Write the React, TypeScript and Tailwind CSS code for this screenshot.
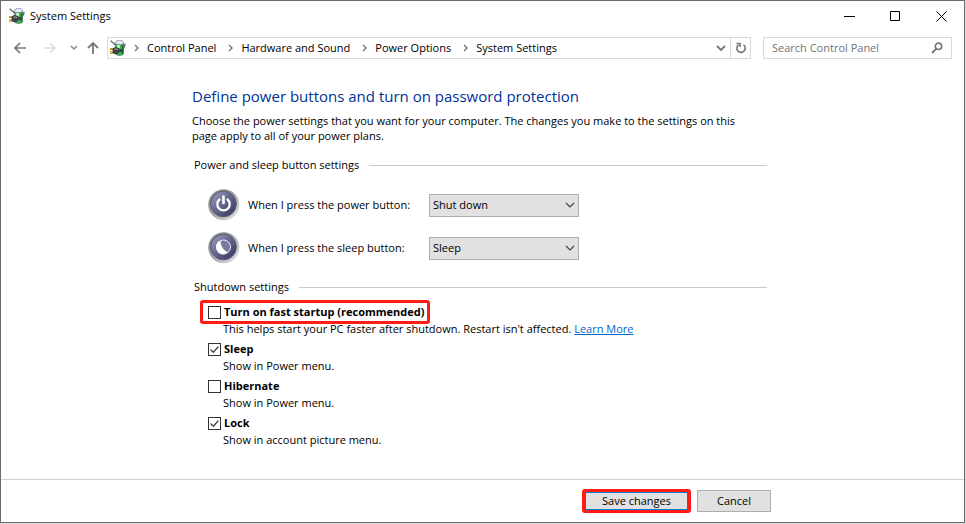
import React from "react";

const crumbs = ["Control Panel", "Hardware and Sound", "Power Options", "System Settings"];

const shutdownOptions = [
  { id: "fast-startup", label: "Turn on fast startup (recommended)", note: "This helps start your PC faster after shutdown. Restart isn't affected.", checked: false, marked: true, link: "Learn More" },
  { id: "sleep", label: "Sleep", note: "Show in Power menu.", checked: true },
  { id: "hibernate", label: "Hibernate", note: "Show in Power menu.", checked: false },
  { id: "lock", label: "Lock", note: "Show in account picture menu.", checked: true },
];

const PowerPlanIcon = () => (
  <svg width="16" height="16" viewBox="0 0 16 16" className="shrink-0">
    <path d="M1 .5C1 3 4 2 5 5M12.500 8c2 0 2.500-2 2.500-4.500" fill="none" stroke="#50545c" strokeWidth="1.200" />
    <path d="M5.500 3.500v10c0 2.500 8 2.500 8 0v-10z" fill="#3fb653" stroke="#3a5f46" strokeWidth="0.600" />
    <path d="M11.800 4h1.400v10l-1.400.8z" fill="#16742f" />
    <path d="M7 5h3v3H7z" fill="#b9efc3" />
    <path d="M5.500 2.500C6-.5 13-.5 13.500 2.500v1.300c-2 1-6 1-8 0z" fill="#e6eaf6" stroke="#7c86a2" strokeWidth="0.800" />
    <path d="M0 9h3.500M0 12.500h3.500" stroke="#7e6417" strokeWidth="2.200" />
    <path d="M0 8.800h3.500M0 12.300h3.500" stroke="#f0b91d" strokeWidth="1.200" />
    <path d="M3 8.500 5 7.500l3 .5 1.500 1.500H12v2H9.500L8 13.200l-3 .5L3 13z" fill="#42464c" stroke="#202326" strokeWidth="0.600" />
    <path d="M4.500 9h2l1.500.8" fill="none" stroke="#a5a9b0" strokeWidth="1" />
  </svg>
);

const RoundIcon = ({ id, children }: { id: string; children: React.ReactNode }) => (
  <svg width="32" height="32" viewBox="0 0 32 32" className="shrink-0">
    <defs>
      <linearGradient id={`${id}-rim`} x1="0" y1="0" x2="1" y2="1">
        <stop offset="0" stopColor="#77777b" />
        <stop offset="0.500" stopColor="#a5a5a9" />
        <stop offset="1" stopColor="#ededf0" />
      </linearGradient>
      <linearGradient id={`${id}-face`} x1="0" y1="0" x2="1" y2="1">
        <stop offset="0" stopColor="#a4a5c4" />
        <stop offset="0.450" stopColor="#676a92" />
        <stop offset="1" stopColor="#303259" />
      </linearGradient>
    </defs>
    <circle cx="15.800" cy="15.800" r="15.500" fill={`url(#${id}-rim)`} />
    <circle cx="15.500" cy="15" r="12.800" fill={`url(#${id}-face)`} stroke="#55566f" strokeWidth="1" />
    {children}
  </svg>
);

const Chevron = ({ className }: { className: string }) => (
  <svg width="10" height="10" viewBox="0 0 10 10" className={className}>
    <path d="m1 3 4 4 4-4" fill="none" stroke="currentColor" strokeWidth="1.200" />
  </svg>
);

const ButtonSetting = ({ id, label, options, icon }: { id: string; label: string; options: string[]; icon: React.ReactNode }) => (
  <div className="flex h-8 items-center">
    {icon}
    <label htmlFor={id} className="ml-2 w-[181px]">{label}</label>
    <div className="grid items-center">
      <select id={id} className="col-start-1 row-start-1 h-[23px] w-[150px] appearance-none border border-[#adadad] bg-[#e1e1e1] pl-[3px] outline-none">
        {options.map((option) => <option key={option}>{option}</option>)}
      </select>
      <Chevron className="pointer-events-none col-start-1 row-start-1 mr-1 justify-self-end text-[#444]" />
    </div>
  </div>
);

const SectionTitle = ({ children }: { children: React.ReactNode }) => (
  <h2 className="flex items-center gap-2.5 pl-0.5">
    {children}
    <span className="h-px flex-1 bg-[#cbcbcb]" />
  </h2>
);

const App = () => {
  return (
    <div className="flex min-h-screen bg-[#dcdcdc] pr-px pb-px font-['Open_Sans','Noto_Sans',sans-serif] text-[11px] leading-4 text-black">
      <div className="flex flex-1 flex-col border border-[#6e6a6c] bg-white">
        <header>
          <div className="flex h-[30px] items-center pl-2">
            <PowerPlanIcon />
            <h1 className="ml-[5px] flex-1">System Settings</h1>
            <button aria-label="Minimize" className="grid h-7 w-[46px] place-items-center">
              <svg width="11" height="11"><path d="M0 5.500h11" stroke="#000" /></svg>
            </button>
            <button aria-label="Maximize" className="grid h-7 w-[46px] place-items-center">
              <svg width="11" height="11"><path d="M.5.5h9v9h-9z" fill="none" stroke="#000" /></svg>
            </button>
            <button aria-label="Close" className="grid h-7 w-[46px] place-items-center">
              <svg width="11" height="11"><path d="m.5.5 10 10m0-10-10 10" stroke="#000" /></svg>
            </button>
          </div>
          <nav className="flex h-[34px] items-center pr-3 pl-[11px] text-[#777]">
            <button aria-label="Back" className="grid w-4 place-items-center">
              <svg width="14" height="12" viewBox="0 0 14 12"><path d="M13 6H2m5-5L2 6l5 5" fill="none" stroke="#777" strokeWidth="1.700" /></svg>
            </button>
            <button aria-label="Forward" className="ml-3.5 grid w-4 place-items-center">
              <svg width="14" height="12" viewBox="0 0 14 12"><path d="M1 6h11M7 1l5 5-5 5" fill="none" stroke="#d9d9d9" strokeWidth="1.500" /></svg>
            </button>
            <button aria-label="Recent locations" className="ml-3 grid w-2 place-items-center">
              <svg width="8" height="8" viewBox="0 0 8 8"><path d="m1 2 3 3 3-3" fill="none" stroke="#888" strokeWidth="1.500" /></svg>
            </button>
            <button aria-label="Up" className="ml-2 grid w-3.5 place-items-center">
              <svg width="12" height="14" viewBox="0 0 12 14"><path d="M6 13V2M1 7l5-5 5 5" fill="none" stroke="#777" strokeWidth="1.800" /></svg>
            </button>
            <div className="ml-[7px] flex h-[22px] flex-1 items-center border border-[#d9d9d9]">
              <span className="ml-0.5"><PowerPlanIcon /></span>
              {crumbs.map((crumb) => (
                <React.Fragment key={crumb}>
                  <svg width="7" height="8" viewBox="0 0 7 8" className="mx-[7px]"><path d="m2 1 3 3-3 3" fill="none" stroke="#777" strokeWidth="1.400" /></svg>
                  <a href="#" className="mr-1 text-black">{crumb}</a>
                </React.Fragment>
              ))}
              <button aria-label="Previous locations" className="mr-1 ml-auto grid place-items-center">
                <svg width="10" height="8" viewBox="0 0 10 8"><path d="m1 2 4 4 4-4" fill="none" stroke="#777" strokeWidth="1.800" /></svg>
              </button>
              <button aria-label="Refresh" className="grid h-5 w-5 place-items-center border-l border-[#d9d9d9]">
                <svg width="12" height="12" viewBox="0 0 12 12"><path d="M8.500 2.800A4.200 4.200 0 1 1 3.500 2.800M1.500 1.500H5V5" fill="none" stroke="#777" strokeWidth="1.600" /></svg>
              </button>
            </div>
            <div className="ml-3 flex h-[22px] w-[189px] items-center border border-[#d9d9d9] pr-2 pl-2">
              <input aria-label="Search Control Panel" placeholder="Search Control Panel" className="min-w-0 flex-1 outline-none placeholder:text-[#747474]" />
              <svg width="12" height="12" viewBox="0 0 12 12"><circle cx="7.500" cy="4.300" r="3.200" fill="none" stroke="#777" strokeWidth="1.600" /><path d="M5.200 6.800 1 11" stroke="#777" strokeWidth="1.900" /></svg>
            </div>
          </nav>
        </header>

        <main className="flex-1 pt-[21px] pr-4 pb-7 pl-[191px]">
          <div className="max-w-[575px]">
            <h2 className="text-[15px] leading-5 text-[#003399]">Define power buttons and turn on password protection</h2>
            <p className="mt-[7px] mb-3.5 pr-3 leading-[15px]">
              Choose the power settings that you want for your computer. The changes you make to the settings on this page apply to all of your power plans.
            </p>

            <SectionTitle>Power and sleep button settings</SectionTitle>
            <div className="mt-4 mb-[15px] space-y-[11px] pl-4">
              <ButtonSetting
                id="power-button"
                label="When I press the power button:"
                options={["Shut down", "Sleep", "Do nothing"]}
                icon={
                  <RoundIcon id="power">
                    <path d="M11.500 10.500a6.200 6.200 0 1 0 8 0" fill="none" stroke="#fff" strokeWidth="2.300" strokeLinecap="round" />
                    <path d="M15.500 7.500v6.500" stroke="#fff" strokeWidth="2.600" strokeLinecap="round" />
                  </RoundIcon>
                }
              />
              <ButtonSetting
                id="sleep-button"
                label="When I press the sleep button:"
                options={["Sleep", "Shut down", "Do nothing"]}
                icon={
                  <RoundIcon id="moon">
                    <circle cx="15.500" cy="15" r="7" fill="#777a9c" stroke="#eeeff5" strokeWidth="1" />
                    <path d="M12.500 8.500C6.500 10 6.500 20 13 22c2.500.5 5 0 6.500-2-4-1.500-7-6-7-11.500z" fill="#fff" />
                  </RoundIcon>
                }
              />
            </div>

            <SectionTitle>Shutdown settings</SectionTitle>
            <ul className="mt-[5px] pl-2">
              {shutdownOptions.map((option) => (
                <li key={option.id}>
                  <div className={`flex h-6 w-fit items-center border-[3px] pr-[3px] pl-[5px] ${option.marked ? "rounded-[3px] border-[#fe1c15]" : "border-transparent"}`}>
                    <div className="grid">
                      <input type="checkbox" id={option.id} defaultChecked={option.checked} className="peer col-start-1 row-start-1 size-[13px] appearance-none border border-[#333] bg-white" />
                      <svg width="13" height="13" viewBox="0 0 13 13" className="pointer-events-none invisible col-start-1 row-start-1 peer-checked:visible">
                        <path d="m2.500 6.500 2.800 2.800 5-5.500" fill="none" stroke="#444" strokeWidth="1.300" />
                      </svg>
                    </div>
                    <label htmlFor={option.id} className="ml-[3px] font-bold">{option.label}</label>
                  </div>
                  <p className="-mt-[3px] pl-[23px]">
                    {option.note} {option.link && <a href="#" className="text-[#0066cc] underline">{option.link}</a>}
                  </p>
                </li>
              ))}
            </ul>
          </div>
        </main>

        <footer className="border-t border-[#d0d0d0] py-[9px] pl-[581px]">
          <div className="flex items-center gap-1.5">
            <button className="h-6 w-[109px] rounded-[3px] border-[3px] border-[#fe1c15] bg-[#e1e1e1] leading-4 inset-ring inset-ring-[#0078d7]">Save changes</button>
            <button className="h-[22px] w-[74px] border border-[#adadad] bg-[#e1e1e1] leading-4">Cancel</button>
          </div>
        </footer>
      </div>
    </div>
  );
};

export default App;
